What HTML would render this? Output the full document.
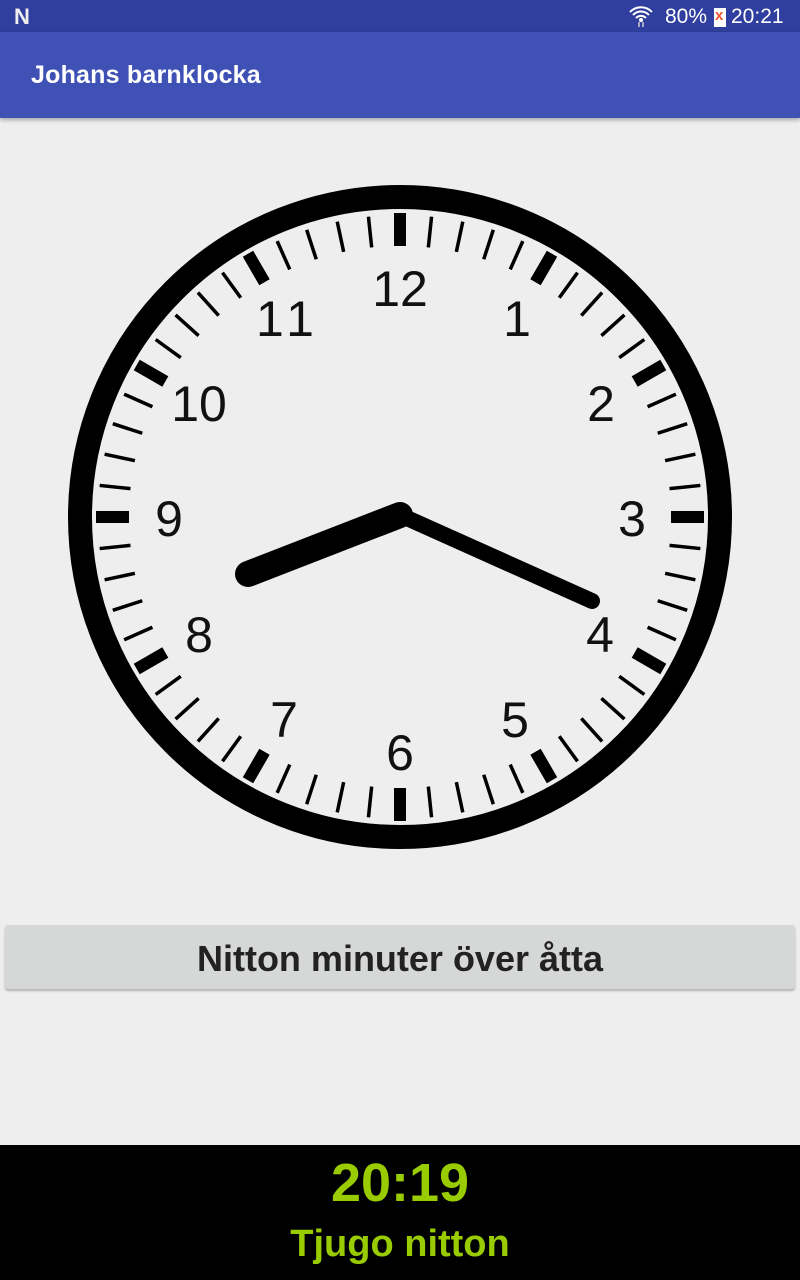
<!DOCTYPE html>
<html><head><meta charset="utf-8"><style>
body{margin:0;width:800px;height:1280px;background:#eeeeee;font-family:"Liberation Sans",sans-serif;position:relative;overflow:hidden}
.sb{position:absolute;left:0;top:0;width:800px;height:32px;background:#303f9f;color:#fff}
.ab{position:absolute;left:0;top:32px;width:800px;height:86px;background:#3f51b5;box-shadow:0 2px 4px rgba(0,0,0,.3)}
.ab span{position:absolute;left:31px;top:29px;color:#fff;font-size:25px;font-weight:bold;letter-spacing:0.2px}
.btn{position:absolute;left:5px;top:925px;width:790px;height:64px;background:#d6d7d7;border-radius:3px;box-shadow:0 2px 2px rgba(0,0,0,.25);text-align:center;line-height:68px;font-size:36px;font-weight:bold;color:#222}
.bot{position:absolute;left:0;top:1145px;width:800px;height:135px;background:#000;color:#99cc00;text-align:center;font-weight:bold}
</style></head><body>
<div class="sb">
<span style="position:absolute;left:14px;top:4px;font-size:22px;font-weight:bold;color:#eee">N</span>
<svg style="position:absolute;left:628px;top:4px" width="26" height="24" viewBox="0 0 26 24"><path d="M2 8a15 15 0 0 1 22 0M5 11a11 11 0 0 1 16 0M8 14a7 7 0 0 1 10 0" stroke="#fff" stroke-width="2" fill="none"/><circle cx="13" cy="16" r="2" fill="#fff"/><path d="M11 18v5M15 18v5" stroke="#ccc" stroke-width="1.5"/></svg>
<span style="position:absolute;left:665px;top:5px;font-size:21px">80%</span>
<div style="position:absolute;left:714px;top:8px;width:12px;height:19px;background:#fff"></div>
<span style="position:absolute;left:715px;top:7px;font-size:15px;color:#e53;font-weight:bold">x</span>
<span style="position:absolute;left:731px;top:5px;font-size:21px">20:21</span>
</div>
<div class="ab"><span>Johans barnklocka</span></div>
<svg style="position:absolute;left:0;top:0" width="800" height="1000">
<defs>
<g id="t5">
<line x1="400" y1="213" x2="400" y2="246" stroke="#000" stroke-width="12"/>
<line x1="400" y1="215" x2="400" y2="246" stroke="#000" stroke-width="3.5" transform="rotate(6 400 517)"/>
<line x1="400" y1="215" x2="400" y2="246" stroke="#000" stroke-width="3.5" transform="rotate(12 400 517)"/>
<line x1="400" y1="215" x2="400" y2="246" stroke="#000" stroke-width="3.5" transform="rotate(18 400 517)"/>
<line x1="400" y1="215" x2="400" y2="246" stroke="#000" stroke-width="3.5" transform="rotate(24 400 517)"/>
</g></defs>
<circle cx="400" cy="517" r="320" fill="none" stroke="#000" stroke-width="24"/>
<use href="#t5"/><use href="#t5" transform="rotate(30 400 517)"/><use href="#t5" transform="rotate(60 400 517)"/><use href="#t5" transform="rotate(90 400 517)"/><use href="#t5" transform="rotate(120 400 517)"/><use href="#t5" transform="rotate(150 400 517)"/><use href="#t5" transform="rotate(180 400 517)"/><use href="#t5" transform="rotate(210 400 517)"/><use href="#t5" transform="rotate(240 400 517)"/><use href="#t5" transform="rotate(270 400 517)"/><use href="#t5" transform="rotate(300 400 517)"/><use href="#t5" transform="rotate(330 400 517)"/>
<g font-family="Liberation Sans,sans-serif" font-size="50" text-anchor="middle" fill="#111">
<text x="400" y="306">12</text><text x="517" y="336">1</text><text x="601" y="421">2</text><text x="632" y="536">3</text><text x="600" y="652">4</text><text x="515" y="737">5</text><text x="400" y="770">6</text><text x="284" y="737">7</text><text x="199" y="652">8</text><text x="169" y="536">9</text><text x="199" y="421">10</text><text x="288" y="336" letter-spacing="6">11</text>
</g>
<line x1="400" y1="515" x2="248" y2="574" stroke="#000" stroke-width="26" stroke-linecap="round"/>
<line x1="400" y1="515" x2="592" y2="601" stroke="#000" stroke-width="16" stroke-linecap="round"/>
</svg>
<div class="btn">Nitton minuter över åtta</div>
<div class="bot"><div style="font-size:54px;margin-top:9px;line-height:58px">20:19</div><div style="font-size:38px;margin-top:10px;line-height:44px;font-weight:bold">Tjugo nitton</div></div>
</body></html>
